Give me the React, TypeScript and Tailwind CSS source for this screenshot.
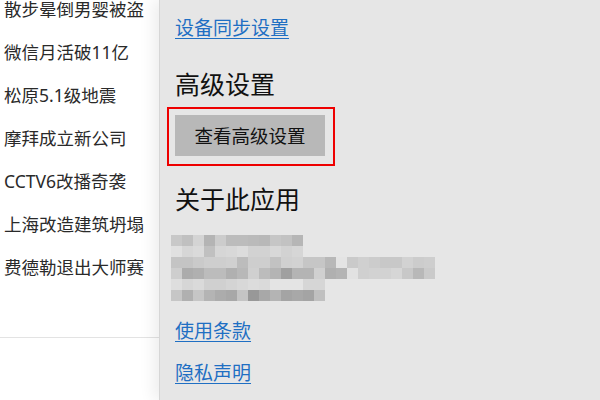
import React from "react";

const news = [
  "散步晕倒男婴被盗",
  "微信月活破11亿",
  "松原5.1级地震",
  "摩拜成立新公司",
  "CCTV6改播奇袭",
  "上海改造建筑坍塌",
  "费德勒退出大师赛",
];

const rows: string[][] = [
  ["c8", "c0", "d4", "b4", "cc", "bc", "bc", "ba", "b8", "c6", "c2", "b6"],
  ["e0", "d6", "da", "c0", "d6", "d8", "dc", "d2", "d2", "d8", "d2", "d6"],
  ["c4", "c4", "ca", "ce", "ce", "d0", "bc", "ce", "ce", "c2", "d0", "d2", "c6", "c6", "b8", "e4", "ca", "d0", "cc", "c8", "c8", "d2", "cc", "ce"],
  ["ce", "ac", "b0", "bc", "bc", "b0", "b8", "d0", "bc", "b4", "a0", "b4", "b4", "d0", "b0", "b4", "e2", "d0", "d2", "d2", "d6", "c8", "b8", "ca"],
  ["de", "d6", "da", "d0", "d0", "d4", "d8", "dc", "da", "e4", "e4", "e4", "d6", "d6"],
  ["c6", "b0", "c6", "b4", "ac", "a8", "c4", "98", "a8", "b4", "a4", "a8", "a4", "c0"],
];

const font = { fontFamily: '"Noto Sans", "Noto Sans CJK SC", sans-serif' };

export default function App() {
  return (
    <div className="flex h-[400px] w-[600px] overflow-hidden bg-white" style={font}>
      <div className="w-[159px] shrink-0 overflow-hidden bg-white">
        <div className="-mt-[12px] h-[350px] border-b border-[#e3e3e3]">
          {news.map((t) => (
            <div key={t} className="flex h-[43px] items-center whitespace-nowrap pl-[4px] text-[17.5px] text-[#2a2a2a]">
              {t}
            </div>
          ))}
        </div>
      </div>
      <div className="relative z-10 flex flex-1 flex-col border-l border-[#d6d6d6] bg-[#e6e6e6] pl-[15px] shadow-[-6px_0_14px_rgba(0,0,0,0.07)]">
        <div className="h-[69px] pt-[16px]">
          <a className="text-[19px] leading-[24px] text-[#1f6fc3] underline underline-offset-[3px]">设备同步设置</a>
        </div>
        <div className="text-[25px] leading-[30px] text-[#111]">高级设置</div>
        <div className="mt-[8px] ml-[-8px] self-start border-2 border-[#ee0000] pb-[8px] pl-[6px] pr-[8px] pt-[6px]">
          <div className="flex h-[41px] w-[150px] items-center justify-center bg-[#b8b8b8] text-[18.5px] text-[#111]">
            查看高级设置
          </div>
        </div>
        <div className="mt-[18px] text-[25px] leading-[30px] text-[#111]">关于此应用</div>
        <div className="mt-[21px] ml-[-4px] flex flex-col">
          {rows.map((r, i) => (
            <div key={i} className="flex">
              {r.map((c, j) => (
                <div key={j} className="h-[11px] w-[11px]" style={{ backgroundColor: `#${c}${c}${c}` }} />
              ))}
            </div>
          ))}
        </div>
        <div className="mt-[18px]">
          <a className="text-[19px] leading-[24px] text-[#1f6fc3] underline underline-offset-[3px]">使用条款</a>
        </div>
        <div className="mt-[17px]">
          <a className="text-[19px] leading-[24px] text-[#1f6fc3] underline underline-offset-[3px]">隐私声明</a>
        </div>
      </div>
    </div>
  );
}
